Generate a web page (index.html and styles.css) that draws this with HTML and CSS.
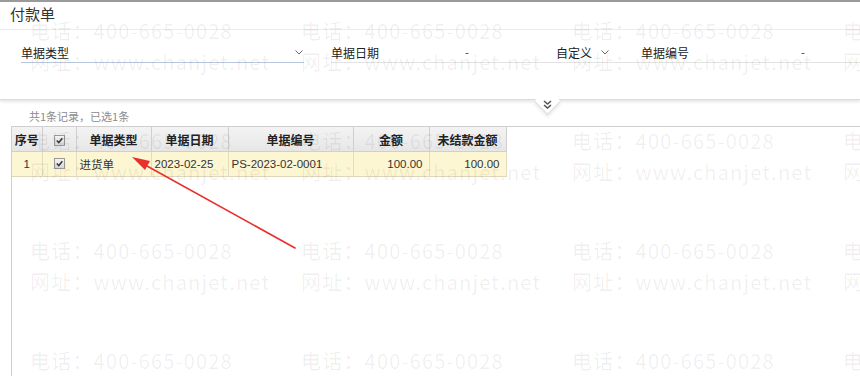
FILE: index.html
```html
<!DOCTYPE html>
<html lang="zh">
<head>
<meta charset="utf-8">
<title>付款单</title>
<link rel="stylesheet" href="styles.css">
</head>
<body>
<div class="page">
  <div class="topline"></div>
  <div class="title">付款单</div>
  <div class="filter">
    <div class="fields">
      <div class="field f-type"><span class="label">单据类型</span><svg class="chev" viewBox="0 0 8 5"><path d="M0.5 0.5 L4 4 L7.5 0.5" fill="none" stroke="#666" stroke-width="1"/></svg></div>
      <div class="field f-date"><span class="label">单据日期</span><span class="dash">-</span></div>
      <div class="field f-custom"><span class="label">自定义</span><svg class="chev" viewBox="0 0 8 5"><path d="M0.5 0.5 L4 4 L7.5 0.5" fill="none" stroke="#666" stroke-width="1"/></svg></div>
      <div class="field f-code"><span class="label">单据编号</span><span class="dash">-</span></div>
    </div>
    <div class="notch"></div>
    <svg class="dchev" viewBox="0 0 9 9"><path d="M1 1 L4.5 4 L8 1 M1 5 L4.5 8 L8 5" fill="none" stroke="#555" stroke-width="1.6"/></svg>
  </div>
  <div class="summary">共1条记录，已选1条</div>
  <div class="grid">
    <table>
      <colgroup>
        <col class="c-no"><col class="c-chk"><col class="c-type"><col class="c-date"><col class="c-code"><col class="c-amt"><col class="c-open">
      </colgroup>
      <thead>
        <tr>
          <th>序号</th>
          <th><span class="cb"><svg viewBox="0 0 10 10"><path d="M2 5 L4.2 7.3 L8.2 2.5" fill="none" stroke="#333" stroke-width="1.6"/></svg></span></th>
          <th>单据类型</th>
          <th>单据日期</th>
          <th>单据编号</th>
          <th>金额</th>
          <th>未结款金额</th>
        </tr>
      </thead>
      <tbody>
        <tr>
          <td class="ctr">1</td>
          <td class="ctr"><span class="cb"><svg viewBox="0 0 10 10"><path d="M2 5 L4.2 7.3 L8.2 2.5" fill="none" stroke="#333" stroke-width="1.6"/></svg></span></td>
          <td>进货单</td>
          <td>2023-02-25</td>
          <td>PS-2023-02-0001</td>
          <td class="num">100.00</td>
          <td class="num">100.00</td>
        </tr>
      </tbody>
    </table>
  </div>

  <div class="watermark" aria-hidden="true">
    <div class="wm"><div>电话：400-665-0028</div><div>网址：www.chanjet.net</div></div>
    <div class="wm"><div>电话：400-665-0028</div><div>网址：www.chanjet.net</div></div>
    <div class="wm"><div>电话：400-665-0028</div><div>网址：www.chanjet.net</div></div>
    <div class="wm"><div>电话：400-665-0028</div><div>网址：www.chanjet.net</div></div>
    <div class="wm"><div>电话：400-665-0028</div><div>网址：www.chanjet.net</div></div>
    <div class="wm"><div>电话：400-665-0028</div><div>网址：www.chanjet.net</div></div>
    <div class="wm"><div>电话：400-665-0028</div><div>网址：www.chanjet.net</div></div>
    <div class="wm"><div>电话：400-665-0028</div><div>网址：www.chanjet.net</div></div>
    <div class="wm"><div>电话：400-665-0028</div><div>网址：www.chanjet.net</div></div>
    <div class="wm"><div>电话：400-665-0028</div><div>网址：www.chanjet.net</div></div>
    <div class="wm"><div>电话：400-665-0028</div><div>网址：www.chanjet.net</div></div>
    <div class="wm"><div>电话：400-665-0028</div><div>网址：www.chanjet.net</div></div>
    <div class="wm"><div>电话：400-665-0028</div><div>网址：www.chanjet.net</div></div>
    <div class="wm"><div>电话：400-665-0028</div><div>网址：www.chanjet.net</div></div>
    <div class="wm"><div>电话：400-665-0028</div><div>网址：www.chanjet.net</div></div>
    <div class="wm"><div>电话：400-665-0028</div><div>网址：www.chanjet.net</div></div>
  </div>

  <svg class="arrow" viewBox="0 0 860 376" aria-hidden="true">
    <path d="M295 248 L147 166" stroke="#e8302c" stroke-width="1.6" fill="none" stroke-linecap="round"/>
    <path d="M132 157 L150 161 L145 170 Z" fill="#e8302c"/>
  </svg>
</div>
</body>
</html>
```

FILE: styles.css
```css
html, body {
  margin: 0;
  padding: 0;
  background: #fff;
}
body {
  font-family: "Noto Sans CJK SC", "Liberation Sans", sans-serif;
  color: #333;
  width: 860px;
  height: 376px;
  overflow: hidden;
}
.page {
  position: relative;
  width: 860px;
  height: 376px;
  overflow: hidden;
}
.topline {
  height: 2px;
  background: #9a9a9a;
}
.title {
  height: 27px;
  line-height: 24px;
  padding-left: 10px;
  font-size: 15px;
  color: #333;
}
.filter {
  position: relative;
  height: 69px;
  border-top: 1px solid #ececec;
  border-bottom: 1px solid #dcdcdc;
  box-shadow: 0 2px 3px rgba(0, 0, 0, 0.10);
  background: #fff;
  z-index: 2;
}
.fields {
  display: flex;
  padding: 12px 0 0 21px;
}
.field {
  display: flex;
  align-items: center;
  height: 20px;
  border-bottom: 1px solid #e3e3e3;
  font-size: 12px;
  color: #222;
}
.f-type {
  width: 283px;
  border-bottom-color: #b9c6dc;
  justify-content: space-between;
}
.f-type .chev { margin-right: 1px; }
.f-date {
  margin-left: 27px;
  width: 225px;
}
.f-date .dash { margin-left: 86px; }
.f-custom {
  width: 85px;
}
.f-custom .chev { margin-left: 9px; }
.f-code {
  flex: 1;
}
.f-code .dash { margin-left: 112px; }
.label { white-space: nowrap; }
.dash { font-size: 11px; color: #333; }
.chev {
  width: 8px;
  height: 5px;
}
.notch {
  position: absolute;
  left: 538px;
  top: 62px;
  width: 18px;
  height: 18px;
  background: #fff;
  border-right: 1px solid #dcdcdc;
  border-bottom: 1px solid #dcdcdc;
  transform: rotate(45deg);
  box-shadow: 2px 2px 3px rgba(0, 0, 0, 0.08);
}
.dchev {
  position: absolute;
  left: 543px;
  top: 70px;
  width: 9px;
  height: 9px;
}
.summary {
  padding: 9px 0 0 29px;
  height: 17px;
  font-size: 11px;
  color: #8c8c8c;
  line-height: 14px;
}
.grid {
  margin-left: 11px;
  height: 260px;
  border-top: 1px solid #cfcfcf;
  border-left: 1px solid #cfcfcf;
}
table {
  border-collapse: collapse;
  table-layout: fixed;
  width: 494px;
  font-size: 12px;
}
.c-no { width: 30px; }
.c-chk { width: 34px; }
.c-type { width: 75px; }
.c-date { width: 77px; }
.c-code { width: 125px; }
.c-amt { width: 76px; }
.c-open { width: 77px; }
th {
  height: 24px;
  padding: 0;
  font-weight: bold;
  font-size: 12px;
  color: #222;
  background: linear-gradient(#f3f3f3, #e6e6e6);
  border-right: 1px solid #cfcfcf;
  border-bottom: 1px solid #cfcfcf;
  text-align: center;
}
td {
  height: 24px;
  padding: 0 3px;
  background: #fdf6d2;
  border-right: 1px solid #e2dcc0;
  border-bottom: 1px solid #ddd6b8;
  font-family: "Liberation Sans", "Noto Sans CJK SC", sans-serif;
  font-size: 11.5px;
  color: #333;
  white-space: nowrap;
  overflow: hidden;
}
td.ctr { text-align: center; }
td.num { text-align: right; padding-right: 6px; }
.cb {
  display: inline-block;
  width: 9px;
  height: 9px;
  border: 1px solid #9a9a9a;
  background: linear-gradient(#f4f4f4, #d8d8d8);
  vertical-align: middle;
  position: relative;
  top: -1px;
}
.cb svg {
  display: block;
  width: 9px;
  height: 9px;
}
.watermark {
  position: absolute;
  left: 30px;
  top: 15px;
  display: grid;
  grid-template-columns: repeat(4, 271px);
  grid-auto-rows: 110px;
  pointer-events: none;
  z-index: 5;
}
.wm {
  font-family: "Noto Sans CJK SC", sans-serif;
  font-size: 20px;
  line-height: 31px;
  letter-spacing: 1.2px;
  color: rgba(0, 0, 0, 0.065);
  white-space: nowrap;
}
.arrow {
  position: absolute;
  left: 0;
  top: 0;
  width: 860px;
  height: 376px;
  pointer-events: none;
  z-index: 6;
}
```
